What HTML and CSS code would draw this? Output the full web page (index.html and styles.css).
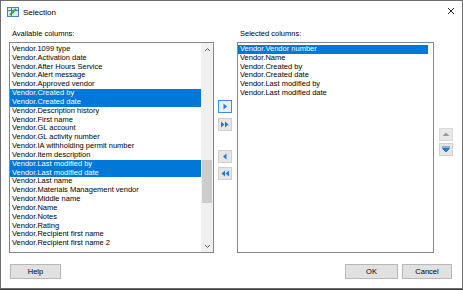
FILE: index.html
```html
<!DOCTYPE html>
<html>
<head>
<meta charset="utf-8">
<link rel="stylesheet" href="styles.css">
</head>
<body>
<div class="dialog">
  <div class="titlebar">
    <svg class="appicon" width="12" height="10" viewBox="0 0 12 10">
      <rect x="0.5" y="0.5" width="11" height="9" fill="#dbe9f7" stroke="#4b7fb8"/>
      <line x1="0.5" y1="3.5" x2="11.5" y2="3.5" stroke="#4b7fb8"/>
      <line x1="4.5" y1="0.5" x2="4.5" y2="9.5" stroke="#4b7fb8"/>
      <path d="M3 8 L9 2" stroke="#3aa33a" stroke-width="2"/>
    </svg>
    <span class="title">Selection</span>
    <svg class="close" width="8" height="8" viewBox="0 0 8 8">
      <path d="M1 1 L7 7 M7 1 L1 7" stroke="#222" stroke-width="1"/>
    </svg>
  </div>
  <div class="content">
    <div class="col col-left">
      <div class="label">Available columns:</div>
      <div class="listbox">
        <div class="items">
          <div class="item">Vendor.1099 type</div>
          <div class="item">Vendor.Activation date</div>
          <div class="item">Vendor.After Hours Service</div>
          <div class="item">Vendor.Alert message</div>
          <div class="item">Vendor.Approved vendor</div>
          <div class="item sel">Vendor.Created by</div>
          <div class="item sel">Vendor.Created date</div>
          <div class="item">Vendor.Description history</div>
          <div class="item">Vendor.First name</div>
          <div class="item">Vendor.GL account</div>
          <div class="item">Vendor.GL activity number</div>
          <div class="item">Vendor.IA withholding permit number</div>
          <div class="item">Vendor.Item description</div>
          <div class="item sel">Vendor.Last modified by</div>
          <div class="item sel">Vendor.Last modified date</div>
          <div class="item">Vendor.Last name</div>
          <div class="item">Vendor.Materials Management vendor</div>
          <div class="item">Vendor.Middle name</div>
          <div class="item">Vendor.Name</div>
          <div class="item">Vendor.Notes</div>
          <div class="item">Vendor.Rating</div>
          <div class="item">Vendor.Recipient first name</div>
          <div class="item">Vendor.Recipient first name 2</div>
        </div>
        <div class="scrollbar">
          <div class="sb-arrow">
            <svg width="7" height="5" viewBox="0 0 7 5"><path d="M1 4 L3.5 1.5 L6 4" fill="none" stroke="#606060" stroke-width="1"/></svg>
          </div>
          <div class="sb-track">
            <div class="sb-thumb"></div>
          </div>
          <div class="sb-arrow">
            <svg width="7" height="5" viewBox="0 0 7 5"><path d="M1 1 L3.5 3.5 L6 1" fill="none" stroke="#606060" stroke-width="1"/></svg>
          </div>
        </div>
      </div>
    </div>
    <div class="mid">
      <div class="sbtn focus">
        <svg width="14" height="13" viewBox="0 0 14 13"><path d="M5.5 3.5 L9 6.5 L5.5 9.5 Z" fill="#2a7ad0"/></svg>
      </div>
      <div class="sbtn">
        <svg width="14" height="13" viewBox="0 0 14 13"><path d="M3 3.5 L6.5 6.5 L3 9.5 Z M7 3.5 L10.5 6.5 L7 9.5 Z" fill="#2a7ad0"/></svg>
      </div>
      <div class="sbtn gap">
        <svg width="14" height="13" viewBox="0 0 14 13"><path d="M8.5 3.5 L5 6.5 L8.5 9.5 Z" fill="#2a7ad0"/></svg>
      </div>
      <div class="sbtn">
        <svg width="14" height="13" viewBox="0 0 14 13"><path d="M7 3.5 L3.5 6.5 L7 9.5 Z M11 3.5 L7.5 6.5 L11 9.5 Z" fill="#2a7ad0"/></svg>
      </div>
    </div>
    <div class="col col-right">
      <div class="label">Selected columns:</div>
      <div class="listbox">
        <div class="items">
          <div class="item sel">Vendor.Vendor number</div>
          <div class="item">Vendor.Name</div>
          <div class="item">Vendor.Created by</div>
          <div class="item">Vendor.Created date</div>
          <div class="item">Vendor.Last modified by</div>
          <div class="item">Vendor.Last modified date</div>
        </div>
      </div>
    </div>
    <div class="side">
      <div class="sbtn disabled">
        <svg width="14" height="13" viewBox="0 0 14 13"><path d="M3.5 8 L7 4.5 L10.5 8 Z" fill="#9a9a9a"/></svg>
      </div>
      <div class="sbtn">
        <svg width="14" height="13" viewBox="0 0 14 13"><path d="M3 4 L11 4 M3.5 5.5 L10.5 5.5 L7 9 Z" fill="#2a7ad0" stroke="#2a7ad0" stroke-width="1"/></svg>
      </div>
    </div>
  </div>
  <div class="footer">
    <div class="btn">Help</div>
    <div class="spacer"></div>
    <div class="btn ok">OK</div>
    <div class="btn cancel">Cancel</div>
  </div>
</div>
</body>
</html>
```

FILE: styles.css
```css
html, body {
  margin: 0;
  padding: 0;
}
body {
  width: 463px;
  height: 290px;
  background: #3a3a3a;
  font-family: "Liberation Sans", Arial, sans-serif;
  font-size: 7.5px;
  color: #000;
  overflow: hidden;
}
.dialog {
  width: 463px;
  height: 289px;
  box-sizing: border-box;
  border: 1px solid #6e6e6e;
  background: #fff;
  display: flex;
  flex-direction: column;
}
.titlebar {
  height: 22px;
  display: flex;
  align-items: center;
  padding-left: 6px;
  box-sizing: border-box;
}
.appicon {
  margin-right: 4px;
}
.title {
  font-size: 8px;
  flex: 1;
}
.close {
  margin-right: 7px;
  margin-top: -2px;
}
.content {
  display: flex;
  padding-left: 8px;
}
.col {
  display: flex;
  flex-direction: column;
}
.col-left {
  width: 205px;
}
.col-right {
  width: 197px;
}
.label {
  height: 10px;
  line-height: 10px;
  margin-top: 6px;
  margin-bottom: 3px;
  padding-left: 3px;
}
.listbox {
  height: 211px;
  box-sizing: border-box;
  border: 1px solid #828790;
  display: flex;
  overflow: hidden;
}
.items {
  flex: 1;
  padding-top: 2px;
}
.item {
  height: 8.84px;
  line-height: 8.84px;
  padding-left: 2px;
  white-space: nowrap;
}
.item.sel {
  background: #0078d7;
  color: #fff;
}
.col-right .items {
  padding-right: 5px;
}
.scrollbar {
  width: 12px;
  display: flex;
  flex-direction: column;
  background: #f0f0f0;
}
.sb-arrow {
  height: 12px;
  display: flex;
  align-items: center;
  justify-content: center;
}
.sb-track {
  flex: 1;
  display: flex;
  flex-direction: column;
  padding-top: 105px;
}
.sb-thumb {
  height: 43px;
  margin: 0 1px;
  background: #cdcdcd;
}
.mid {
  width: 23px;
  display: flex;
  flex-direction: column;
  padding-top: 77px;
  padding-left: 4px;
  box-sizing: border-box;
  gap: 5px;
}
.mid .gap {
  margin-top: 14px;
}
.mid .sbtn + .sbtn + .gap + .sbtn {
  margin-top: -1px;
}
.sbtn {
  width: 14px;
  height: 13px;
  box-sizing: border-box;
  border: 1px solid #d0d0d0;
  background: #e6e6e6;
  display: flex;
  align-items: center;
  justify-content: center;
}
.sbtn svg {
  margin: -1px;
  display: block;
}
.sbtn.focus {
  border-color: #3b8ee0;
  background: #e5f1fb;
}
.side {
  display: flex;
  flex-direction: column;
  padding-top: 105px;
  padding-left: 5px;
  gap: 2px;
}
.sbtn.disabled {
  background: #e8e8e8;
  border-color: #dadada;
}
.footer {
  display: flex;
  padding: 11px 10px 0 9px;
}
.btn {
  height: 15px;
  box-sizing: border-box;
  border: 1px solid #b8b8b8;
  background: #e1e1e1;
  display: flex;
  align-items: center;
  justify-content: center;
  width: 51px;
}
.spacer {
  flex: 1;
}
.ok {
  width: 53px;
  margin-right: 4px;
}
.cancel {
  width: 50px;
}
```
